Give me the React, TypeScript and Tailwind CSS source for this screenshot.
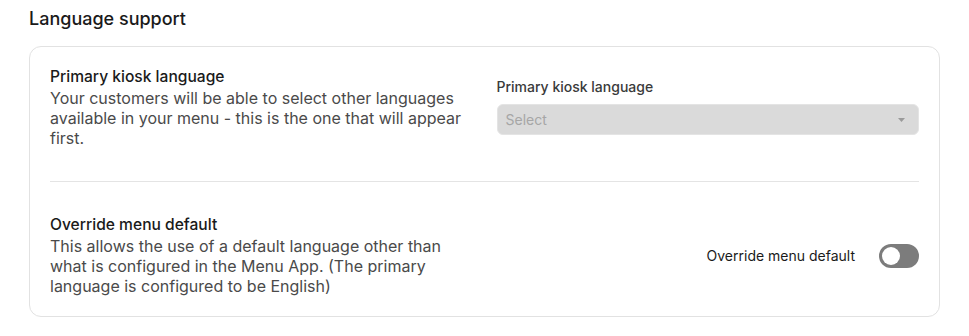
export default function App() {
  return (
    <div className="min-h-screen bg-white px-[29px] pt-[7px] font-['Inter',sans-serif] text-[#1a1a1a]">
      <h2 className="text-[18px] leading-[24px] font-medium">Language support</h2>

      <div className="mt-[15px] rounded-[12px] border border-[#e2e2e2] px-[20px]">
        {/* Primary kiosk language */}
        <div className="grid grid-cols-2 gap-6 pt-[20px] pb-[33px]">
          <div>
            <h3 className="text-[15.6px] leading-[20px] font-medium">Primary kiosk language</h3>
            <p className="text-[16px] leading-[20px] text-[#4a4a4a] mt-[1px]">
              Your customers will be able to select other languages available in your menu - this is the one that will appear first.
            </p>
          </div>
          <div className="pt-[11px]">
            <label className="block text-[14px] leading-[18px] font-medium text-[#3a3a3a]">Primary kiosk language</label>
            <div className="mt-[8px] h-[31px] rounded-[6px] border border-[#e4e4e4] bg-[#dadada] flex items-center justify-between pl-[8px] pr-[13px]">
              <span className="text-[14px] text-[#a6a6a6]">Select</span>
              <svg width="7" height="4" viewBox="0 0 7 4" className="fill-[#9a9a9a]">
                <path d="M0 0h7L3.5 4z" />
              </svg>
            </div>
          </div>
        </div>

        <div className="h-px bg-[#e4e4e4]" />

        {/* Override menu default */}
        <div className="grid grid-cols-2 gap-6 pt-[33px] pb-[20px]">
          <div>
            <h3 className="text-[15.6px] leading-[20px] font-medium">Override menu default</h3>
            <p className="text-[16px] leading-[20px] text-[#4a4a4a] mt-[1px]">
              This allows the use of a default language other than what is configured in the Menu App. (The primary language is configured to be English)
            </p>
          </div>
          <div className="flex items-center justify-end gap-[24px]">
            <span className="text-[14px] text-[#1a1a1a]">Override menu default</span>
            <button className="w-[40px] h-[24px] rounded-full bg-[#7c7c7c] p-[3px] flex items-center">
              <span className="block w-[18px] h-[18px] rounded-full bg-white" />
            </button>
          </div>
        </div>
      </div>
    </div>
  );
}
